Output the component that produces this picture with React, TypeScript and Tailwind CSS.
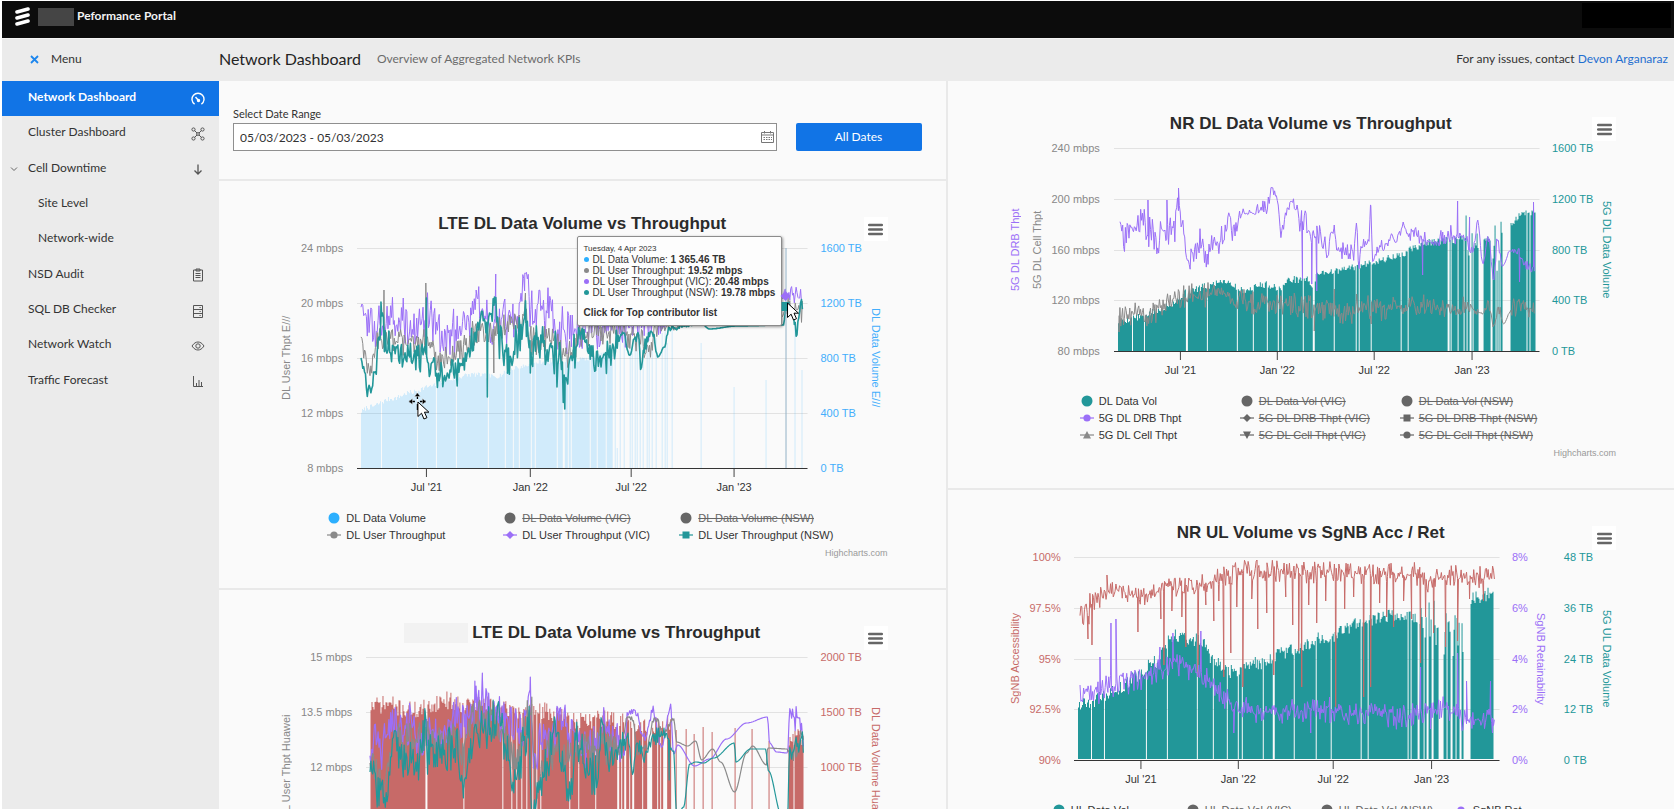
import React from "react";

type Key = [number, number, number?];

function random(seed: number) {
  let s = seed;
  return () => {
    s = (s * 1664525 + 1013904223) % 4294967296;
    return s / 4294967296;
  };
}

function sample(keys: Key[], x: number, amp: number): [number, number] {
  for (let i = 1; i < keys.length; i++) {
    if (x <= keys[i][0]) {
      const a = keys[i - 1];
      const b = keys[i];
      const t = Math.max(0, (x - a[0]) / (b[0] - a[0] || 1));
      const e = t * t * (3 - 2 * t);
      const n = (a[2] ?? amp) * (1 - t) + (b[2] ?? amp) * t;
      return [a[1] + (b[1] - a[1]) * e, n];
    }
  }
  const l = keys[keys.length - 1];
  return [l[1], l[2] ?? amp];
}

function linePath(keys: Key[], amp: number, seed: number, spikes: [number, number][] = []) {
  const rnd = random(seed);
  const pts: [number, number][] = [];
  const end = keys[keys.length - 1][0];
  for (let x = keys[0][0]; x <= end; x += 0.9) {
    const [y, n] = sample(keys, x, amp);
    const r = rnd() * 2 - 1;
    pts.push([x, y + n * r * (0.45 + 0.8 * Math.abs(r))]);
  }
  spikes.forEach((s) => pts.push(s));
  pts.sort((a, b) => a[0] - b[0]);
  return "M" + pts.map((p) => `${p[0].toFixed(1)} ${p[1].toFixed(1)}`).join("L");
}

function barPath(
  keys: Key[],
  amp: number,
  seed: number,
  h: number,
  gaps: [number, number][],
  singles: [number, number][] = [],
) {
  const rnd = random(seed);
  const end = keys[keys.length - 1][0];
  let d = `M${keys[0][0]} ${h}`;
  for (let x = keys[0][0]; x < end; x++) {
    const [y, n] = sample(keys, x, amp);
    const r = rnd();
    const inGap = gaps.some((g) => x >= g[0] && x < g[0] + g[1]);
    const top = inGap ? h : y - n * r;
    d += `V${top.toFixed(1)}H${x + 1}`;
  }
  d += `V${h}Z`;
  singles.forEach(([x, y]) => {
    d += `M${x} ${h}V${y}h1V${h}Z`;
  });
  return d;
}

const TEAL = "#229799";
const PURPLE = "#9b6ff7";
const GREY = "#8a8a8a";
const RED = "#c76a68";

type Layer = { d: string; fill?: string; stroke?: string; width?: number; opacity?: number };
type Marker = "dot" | "circle" | "diamond" | "square" | "up" | "down";
type Item = { label: string; marker: Marker; color: string; off?: boolean };
type Axis = { title: string; color: string; ticks?: string[] };
type ChartProps = {
  title: string;
  redacted?: boolean;
  w: number;
  h: number;
  lines: number;
  layers: Layer[];
  left: Axis[];
  right: Axis[];
  leftClass: string;
  rightClass: string;
  ticksX: number[];
  legend: Item[];
  legendClass: string;
  children?: React.ReactNode;
};

function LegendMark({ marker, color }: { marker: Marker; color: string }) {
  return (
    <svg width="16" height="14" viewBox="0 0 16 14" className="shrink-0" aria-hidden="true">
      {marker === "dot" ? (
        <circle cx="8" cy="7" r="5.5" fill={color} />
      ) : (
        <>
          <path d="M1 7H15" stroke={color} strokeOpacity="0.8" strokeWidth="1.5" />
          {marker === "circle" && <circle cx="8" cy="7" r="3.6" fill={color} />}
          {marker === "diamond" && <path d="M8 3L12 7L8 11L4 7Z" fill={color} />}
          {marker === "square" && <rect x="4.5" y="3.5" width="7" height="7" fill={color} />}
          {marker === "up" && <path d="M8 3L12 10.5H4Z" fill={color} />}
          {marker === "down" && <path d="M8 11L12 3.5H4Z" fill={color} />}
        </>
      )}
    </svg>
  );
}

function Ticks({ axis, className }: { axis: Axis; className: string }) {
  return (
    <div
      className={"-my-[6px] flex flex-col justify-between text-[11px] leading-[12px] whitespace-nowrap " + className}
      style={{ color: axis.color }}
    >
      {axis.ticks!.map((t) => (
        <span key={t}>{t}</span>
      ))}
    </div>
  );
}

const DATES = ["Jul '21", "Jan '22", "Jul '22", "Jan '23"];

function Chart(p: ChartProps) {
  return (
    <section className="flex h-[407px] shrink-0 flex-col bg-[#fafafa] font-['Liberation_Sans',Arial,sans-serif]">
      <div className="grid h-[67px] shrink-0 grid-cols-[1fr_auto_1fr] pt-[31px]">
        <span />
        <h2 className="flex items-center gap-1 self-start text-[17px] leading-[24px] font-bold whitespace-nowrap text-[#2b2b2b]">
          {p.redacted && <span className="h-5 w-16 bg-[#f2f2f2]" />}
          {p.title}
        </h2>
        <button
          type="button"
          aria-label="Chart context menu"
          className="mt-[5px] mr-[58px] flex size-6 items-center justify-center justify-self-end bg-white"
        >
          <svg width="15" height="13" viewBox="0 0 15 13" aria-hidden="true">
            <path d="M1.2 2H13.8M1.2 6.5H13.8M1.2 11H13.8" stroke="#666" strokeWidth="2.5" strokeLinecap="round" />
          </svg>
        </button>
      </div>
      <div className="flex min-h-0 flex-1">
        <div className={"flex shrink-0 gap-2 pr-[14px] pl-[60px] " + p.leftClass}>
          {p.left.map((a) => (
            <span
              key={a.title}
              className="w-[14px] rotate-180 text-center text-[11px] leading-[14px] whitespace-nowrap [writing-mode:vertical-rl]"
              style={{ color: a.color }}
            >
              {a.title}
            </span>
          ))}
          <Ticks axis={p.left[p.left.length - 1]} className="ml-auto text-right" />
        </div>
        <div className="relative min-w-0 flex-1">
          <svg
            className="block h-full w-full overflow-visible"
            viewBox={`0 0 ${p.w} ${p.h}`}
            preserveAspectRatio="none"
            role="img"
            aria-label={p.title}
          >
            {Array.from({ length: p.lines }, (_, i) => {
              const y = Math.round((p.h * i) / p.lines) + 0.5;
              return <path key={i} d={`M0 ${y}H${p.w}`} stroke="#e2e2e2" />;
            })}
            {p.layers.map((l, i) => (
              <path
                key={i}
                d={l.d}
                fill={l.fill ?? "none"}
                fillOpacity={l.opacity}
                stroke={l.stroke}
                strokeWidth={l.width ?? 1}
                strokeLinejoin="round"
              />
            ))}
            <path d={`M0 ${p.h + 0.5}H${p.w}`} stroke="#333" />
          </svg>
          {p.children}
        </div>
        <div className={"flex shrink-0 pr-[60px] pl-[13px] " + p.rightClass}>
          {p.right.map((a) => (
            <div key={a.title} className="flex flex-1 justify-between last:flex-none last:gap-[7px]">
              <Ticks axis={a} className="text-left" />
              <span
                className="w-[14px] text-center text-[11px] leading-[14px] whitespace-nowrap [writing-mode:vertical-rl]"
                style={{ color: a.color }}
              >
                {a.title}
              </span>
            </div>
          ))}
        </div>
      </div>
      <div className="flex h-[41px] shrink-0">
        <div className={"shrink-0 " + p.leftClass} />
        <svg className="h-full min-w-0 flex-1 overflow-visible">
          {DATES.map((t, i) => {
            const x = `${((p.ticksX[i] / p.w) * 100).toFixed(2)}%`;
            return (
              <g key={t}>
                <line x1={x} x2={x} y1="1" y2="9" stroke="#444" />
                <text x={x} y="23" textAnchor="middle" fontSize="11" fill="#333">
                  {t}
                </text>
              </g>
            );
          })}
        </svg>
        <div className={"shrink-0 " + p.rightClass} />
      </div>
      <ul className={"grid justify-center " + p.legendClass}>
        {p.legend.map((it) => (
          <li
            key={it.label}
            className="flex h-[17px] items-center gap-1 pl-2 text-[11px] whitespace-nowrap text-[#333]"
          >
            <LegendMark marker={it.marker} color={it.color} />
            <span className={it.off ? "text-[#666] line-through" : ""}>{it.label}</span>
          </li>
        ))}
      </ul>
      <div className="flex h-[45px] shrink-0 justify-end pt-[4px] pr-[58px]">
        <a href="#highcharts" className="text-[9px] leading-[12px] text-[#999]">
          Highcharts.com
        </a>
      </div>
    </section>
  );
}

const OFF = "#666666";

/* ---------- LTE ---------- */
const lteBars = barPath(
  [[4, 166], [10, 162], [36, 153], [53, 147], [73, 141], [90, 134], [115, 129], [137, 131], [163, 121], [186, 116], [220, 114], [256, 108]],
  5, 7, 220,
  [[24, 1], [60, 1], [79, 1], [99, 1], [131, 1], [148, 1], [156, 1], [162, 1], [174, 1], [178, 1], [200, 1], [206, 2], [211, 1], [214, 1], [233, 1], [240, 1], [249, 1]],
  [[258, 100], [260, 200], [263, 90], [267, 85], [273, 90], [275, 100], [278, 95], [280, 85], [283, 100], [286, 90], [290, 85], [292, 100], [295, 95], [299, 90], [305, 85], [308, 80], [310, 95], [315, 77], [344, 95], [377, 139], [409, 132], [438, 74], [445, 122]],
);
const ltePurple = linePath(
  [[4, 68], [20, 80], [36, 74], [50, 74], [57, 88], [69, 66], [82, 86], [105, 84], [114, 72], [119, 52], [128, 74], [150, 76], [160, 66], [166, 42], [169, 35], [173, 60], [190, 64], [200, 80], [215, 84], [240, 78], [270, 76], [300, 66], [320, 60, 5], [345, 50, 1], [380, 45, 1], [425, 50, 3], [430, 45, 8], [445, 50, 10]],
  20, 21, [[119.3, 42], [138.9, 26], [168, 25]],
);
const lteGrey = linePath(
  [[4, 94], [13, 122], [20, 90], [32, 92], [43, 96], [56, 98], [69, 94], [80, 112], [103, 105], [118, 85], [143, 82], [168, 72], [176, 94], [196, 88], [208, 108], [228, 88], [250, 86], [270, 85], [285, 90], [290, 106], [300, 78], [315, 80, 3], [345, 70, 1], [425, 70, 2], [430, 58, 9], [446, 62, 12]],
  12, 33, [[27, 42], [68.9, 35], [137, 125], [168.6, 45]],
);
const lteTeal = linePath(
  [[4, 115], [13, 146], [18, 124], [21, 90, 14], [25, 68, 18], [28, 92], [37, 107], [53, 105], [66, 110], [76, 122], [85, 129], [100, 123], [110, 108], [120, 80], [130, 74], [138, 60], [143, 94, 16], [153, 108, 16], [166, 84, 16], [168, 68, 18], [174, 104, 16], [182, 92, 16], [193, 100, 22], [200, 110, 26], [208, 132, 28], [213, 114, 20], [223, 92], [232, 92], [237, 112, 16], [253, 106, 15], [262, 90, 8], [267, 86, 3], [273, 108, 4], [278, 90, 3], [282, 88, 4], [284, 122, 3], [288, 96, 8], [296, 86, 8], [301, 109, 0], [308, 99, 1], [312, 80, 3], [345, 76, 0], [353, 81, 0], [380, 78, 0], [427, 77, 0], [430, 62, 6], [437, 68, 8], [440, 86, 2], [443, 58, 8], [446, 56, 6]],
  12, 45, [[24, 54], [69.5, 50], [130.5, 149], [137.6, 49], [173.5, 125], [208, 161]],
);

/* ---------- LTE second vendor ---------- */
const huaBars = barPath(
  [[4.5, 58], [22, 56], [38, 62], [52, 62], [64, 57], [78, 52], [94, 56], [118, 56], [138, 62], [165, 64], [178, 63], [190, 67], [205, 72], [221, 72], [238, 70], [250, 73], [275, 76], [305, 76]],
  18, 71, 220,
  [[59, 2], [97, 1], [136, 1], [145, 1], [150, 1], [155, 1], [160, 1], [166, 1], [170, 1], [174, 1], [203, 1], [212, 1], [229, 1], [251, 2], [255, 1], [258, 2], [263, 1], [266, 2], [276, 1], [281, 5], [291, 1], [294, 1], [297, 4]],
  [[310, 73], [320, 72], [328, 77], [337, 70], [346, 75], [369, 71], [386, 72], [403, 84]],
);
const huaBars2 = barPath([[423, 92], [432, 80], [438, 92]], 14, 17, 220, [[428, 1]]);
const huaPurple = linePath(
  [[4, 106], [10, 74], [14, 92], [21, 78], [30, 70], [48, 70], [58, 90], [64, 74], [78, 72], [94, 60], [98, 75], [105, 50], [116, 44], [121, 55], [138, 62], [158, 68], [164, 35], [168, 100], [181, 78], [197, 62], [205, 84], [228, 92], [238, 74], [248, 80], [258, 96, 8], [262, 56, 3], [270, 54, 4], [278, 80, 4], [288, 56, 6], [296, 90, 3], [305, 50, 1], [308, 98, 1], [312, 88, 0], [329, 109, 0], [344, 102, 0], [361, 82, 0], [381, 66, 0], [402, 60, 0], [404, 86, 0], [411, 95, 0], [422, 96, 0], [424, 60, 8], [435, 62, 12], [438, 86, 4]],
  19, 81, [[109, 24], [116.5, 16], [164.5, 20], [305, 47]],
);
const huaGrey = linePath(
  [[4, 112], [16, 130], [28, 85], [46, 84], [60, 84], [80, 84], [96, 90], [110, 62], [126, 58], [136, 80], [150, 104], [165, 52], [170, 130], [184, 94], [205, 100], [225, 90], [240, 88], [255, 92, 6], [262, 60, 1], [267, 62, 2], [272, 96, 2], [281, 90, 3], [289, 60, 3], [298, 76, 3], [308, 62, 1], [311, 85, 0], [322, 89, 0], [330, 84, 0], [336, 103, 0], [347, 92, 0], [355, 105, 0], [369, 135, 0], [381, 96, 0], [387, 89, 0], [401, 108, 0], [402, 91, 0], [422, 92, 0], [424, 100, 6], [432, 90, 10], [438, 76, 8]],
  16, 91, [[98, 130], [166, 40]],
);
const huaTeal = linePath(
  [[4, 122], [13, 136, 22], [21, 140, 20], [27, 96], [38, 103], [54, 104], [59, 72], [62, 98], [71, 97], [91, 90], [98, 128, 6], [105, 86], [118, 70], [135, 60], [138, 96], [151, 118], [163, 66], [166, 158, 4], [172, 132], [181, 108], [190, 72], [204, 136, 10], [211, 88], [228, 118], [238, 74], [241, 106], [257, 88, 12], [262, 80, 6], [267, 116, 1], [271, 86, 4], [278, 98, 8], [288, 78, 8], [303, 80, 8], [305, 92, 1], [308, 94, 1], [311, 160, 0], [318, 150, 0], [324, 107, 0], [330, 105, 0], [338, 106, 0], [348, 101, 0], [369, 86, 0], [370, 105, 0], [385, 92, 0], [400, 92, 0], [403, 114, 0], [416, 158, 0], [422, 162, 0], [424, 95, 6], [438, 84, 14]],
  19, 97, [[97.5, 141], [303.5, 123]],
);

/* ---------- NR downlink ---------- */
const nrBars = barPath(
  [[4, 177], [22, 173], [43, 167], [56, 159], [76, 146], [92, 142], [109, 136], [130, 146], [150, 140], [166, 143], [176, 135], [193, 135], [200, 144], [203, 128], [220, 127], [243, 122], [260, 117], [287, 111], [297, 104], [314, 98], [334, 96], [350, 94], [352, 120, 60], [367, 100], [370, 94], [378, 96], [380, 130, 60], [390, 110, 40], [397, 78], [407, 71], [414, 68], [422, 66]],
  7, 5, 203,
  [[18, 1], [30, 1], [72, 2], [93, 1], [123, 1], [139, 1], [153, 1], [164, 1], [168, 1], [189, 1], [199, 2], [220, 1], [242, 1], [245, 1], [257, 1], [287, 1], [294, 1], [334, 2], [337, 1], [344, 1], [350, 1], [353, 1], [356, 2], [359, 1], [365, 5], [377, 2], [382, 1], [384, 1], [386, 1], [389, 8], [413, 1], [416, 1]],
);
const nrPurple = linePath(
  [[6, 80], [10, 94], [16, 82], [30, 76], [36, 84], [43, 95], [48, 80], [53, 92], [60, 78], [65, 62], [68, 76], [74, 116, 3], [80, 106], [83, 94], [93, 104], [103, 94], [116, 82], [130, 66, 7], [143, 63, 7], [153, 58, 7], [158, 40, 3], [164, 52, 4], [167, 88, 3], [172, 68, 5], [178, 56, 7], [188, 70], [193, 82], [205, 86, 9], [213, 100, 8], [220, 82], [224, 102, 7], [240, 104, 7], [243, 74, 3], [245, 120, 2], [248, 94, 5], [255, 92, 6], [257, 60, 3], [259, 112, 3], [266, 98, 5], [280, 91, 5], [290, 82, 8], [305, 88, 6], [320, 96, 6], [333, 86, 9], [343, 88, 7], [349, 86, 6], [358, 106, 6], [361, 96, 4], [364, 71, 1], [369, 114, 2], [375, 88, 5], [380, 134, 3], [384, 94, 8], [389, 118, 0], [397, 103, 2], [405, 108, 7], [414, 116, 5], [421, 122, 5]],
  14, 11, [[34, 52], [53, 52], [64.6, 40], [188.7, 131], [198, 136], [203, 143], [220.5, 77], [256.8, 57], [309, 127], [344, 53], [356, 69], [406, 134], [420, 54]],
);
const nrGrey = linePath(
  [[5, 172], [20, 165], [36, 167], [50, 156], [60, 151], [80, 148], [109, 145], [123, 152], [143, 156], [176, 156], [200, 160], [220, 162], [240, 166], [248, 158], [262, 161], [314, 158], [334, 161, 6], [345, 163, 3], [350, 157, 7], [358, 161, 4], [369, 166, 1], [375, 157, 5], [380, 180, 4], [385, 160, 6], [390, 176, 0], [397, 164, 1], [399, 160, 8], [421, 160, 9]],
  10, 19, [[5, 184], [200.5, 183], [220.6, 141], [243, 146], [257.5, 176]],
);

/* ---------- NR uplink ---------- */
const ulBars = barPath(
  [[4, 154], [20, 150], [40, 142], [60, 128], [80, 112], [100, 86], [125, 90], [140, 112], [155, 122], [180, 114], [210, 102], [250, 88], [290, 72], [320, 64], [345, 66], [352, 90, 50], [390, 110, 50], [397, 48], [420, 44]],
  14, 15, 202,
  [[17, 1], [30, 1], [72, 1], [93, 1], [123, 1], [139, 1], [153, 1], [164, 1], [168, 1], [189, 1], [199, 2], [220, 1], [242, 1], [257, 1], [287, 1], [294, 1], [334, 1], [337, 1], [344, 2], [350, 1], [353, 2], [358, 2], [365, 5], [373, 1], [377, 2], [382, 1], [386, 2], [390, 7]],
);
const ulRed = linePath(
  [[6, 66, 18], [14, 56, 18], [22, 44, 10], [32, 36], [60, 38], [80, 36], [90, 30], [130, 28], [150, 18], [180, 12], [210, 15], [260, 15], [300, 18], [340, 16], [355, 24, 10], [370, 18], [421, 20]],
  9, 53,
  [[14, 82], [18, 88], [33, 18], [64, 75], [87, 62], [90, 108], [98, 54], [108, 60], [112, 90], [124, 120], [132, 48], [140, 64], [145, 44], [150, 120], [157, 96], [163, 50], [169, 130], [178, 42], [184, 72], [193, 56], [200, 118], [212, 40], [219, 68], [225, 94], [228, 130], [235, 48], [243, 66], [252, 44], [262, 150], [271, 52], [280, 40], [290, 140], [297, 130], [306, 46], [313, 60], [320, 70], [330, 44], [338, 62], [347, 106], [352, 60], [360, 76], [372, 90], [384, 84], [396, 42], [410, 44]],
);
const ulPurple = linePath(
  [[6, 132], [20, 136], [34, 130], [50, 126], [70, 122], [100, 106], [120, 112], [140, 128], [160, 150], [190, 156], [230, 154], [280, 158], [330, 160], [370, 152], [390, 162], [421, 162]],
  10, 63,
  [[26, 100], [37, 66], [42, 62], [86, 90], [99, 76], [127, 74], [160, 176], [237, 176], [256, 140], [347, 110], [357, 172], [384, 96], [393, 124], [417, 124], [419, 176]],
);

function Tooltip() {
  const rows = [
    ["#2caffe", "DL Data Volume:", "1 365.46 TB"],
    [GREY, "DL User Throughput:", "19.52 mbps"],
    [PURPLE, "DL User Throughput (VIC):", "20.48 mbps"],
    [TEAL, "DL User Throughput (NSW):", "19.78 mbps"],
  ];
  return (
    <div className="absolute -top-3 right-[26px] h-[90px] w-[205px] rounded-[2px] border border-[#8c8c8c] bg-[#fdfdfd] px-[6px] pt-[6px] text-[10px] leading-[11px] whitespace-nowrap text-[#333] shadow-[1px_1px_3px_rgba(0,0,0,0.4)]">
      <div className="text-[8px] leading-[11px]">Tuesday, 4 Apr 2023</div>
      {rows.map(([c, l, v]) => (
        <div key={l} className="flex items-center gap-1">
          <span className="size-[5px] shrink-0 rounded-full" style={{ backgroundColor: c }} />
          <span>
            {l} <b>{v}</b>
          </span>
        </div>
      ))}
      <div className="pt-[9px] font-bold">Click for Top contributor list</div>
    </div>
  );
}

const ARROW = "M1 1V15.5L4.6 12.2L7 18L10 16.7L7.5 11.2H12Z";

function LteOverlay() {
  return (
    <>
      <Tooltip />
      <svg
        className="pointer-events-none absolute inset-0 h-full w-full overflow-visible"
        viewBox="0 0 451 220"
        preserveAspectRatio="none"
        aria-hidden="true"
      >
        <path d="M429.5 0V220" stroke="#93b2c6" strokeWidth="1" />
        <path d="M429 43L434 48L429 53L424 48Z" fill={PURPLE} />
        <path d="M425 54h8v9h-8z" fill={TEAL} />
        <g transform="translate(430 54)">
          <path d={ARROW} fill="#fff" stroke="#000" />
        </g>
        <path d="M52 153.500H69M60.500 145V162" stroke="#000" strokeWidth="1.3" strokeDasharray="6 5 6" />
        <path
          d="M52 153.500l3.500-3v6zM69 153.500l-3.500-3v6zM60.500 145l-3 3.500h6z"
          fill="#000"
          stroke="#fff"
          strokeWidth="0.400"
        />
        <g transform="translate(60 153)">
          <path d={ARROW} fill="#fff" stroke="#000" />
        </g>
      </svg>
    </>
  );
}

const icon = { width: 14, height: 14, viewBox: "0 0 14 14", fill: "none", stroke: "currentColor", strokeWidth: 1 };

const NAV: { label: string; active?: boolean; sub?: boolean; open?: boolean; icon?: React.ReactNode }[] = [
  {
    label: "Network Dashboard",
    active: true,
    icon: (
      <svg {...icon} strokeWidth={1.4}>
        <path d="M3.600 12.200A6 6 0 1 1 10.400 12.200M7.500 8.500L4.500 5" />
        <circle cx="7.500" cy="8.500" r="1" fill="currentColor" />
      </svg>
    ),
  },
  {
    label: "Cluster Dashboard",
    icon: (
      <svg {...icon}>
        <circle cx="2.500" cy="2.500" r="1.600" />
        <circle cx="11.500" cy="2.500" r="1.600" />
        <circle cx="2.500" cy="11.500" r="1.600" />
        <circle cx="11.500" cy="11.500" r="1.600" />
        <path d="M3.600 3.600L6 6M10.400 3.600L8 6M3.600 10.400L6 8M10.400 10.400L8 8M5.800 5.800h2.400v2.400H5.800z" />
      </svg>
    ),
  },
  {
    label: "Cell Downtime",
    open: true,
    icon: (
      <svg {...icon} strokeWidth={1.3}>
        <path d="M7 2.500V12M3.500 8.500L7 12L10.500 8.500" />
      </svg>
    ),
  },
  { label: "Site Level", sub: true },
  { label: "Network-wide", sub: true },
  {
    label: "NSD Audit",
    icon: (
      <svg {...icon}>
        <path d="M2.500 2H11.500V13H2.500ZM5 1H9V3H5ZM4.500 5.500H9.500M4.500 7.500H9.500M4.500 9.500H9.500" />
      </svg>
    ),
  },
  {
    label: "SQL DB Checker",
    icon: (
      <svg {...icon}>
        <path d="M2.500 1.500H11.500V13.500H2.500ZM2.500 5.500H11.500M2.500 9.500H11.500M8.500 3.500H9.700M8.500 7.500H9.700M8.500 11.500H9.700" />
      </svg>
    ),
  },
  {
    label: "Network Watch",
    icon: (
      <svg {...icon}>
        <path d="M1 7C3 4 5 3 7 3S11 4 13 7C11 10 9 11 7 11S3 10 1 7Z" />
        <circle cx="7" cy="7" r="2.200" />
      </svg>
    ),
  },
  {
    label: "Traffic Forecast",
    icon: (
      <svg {...icon}>
        <path d="M2.500 2V12.500H12M5.500 12V9M8 12V6M10.500 12V8" />
      </svg>
    ),
  },
];

function Sidebar() {
  return (
    <nav className="w-[217px] shrink-0 bg-[#ebebeb]">
      <ul className="grid h-[318px] grid-rows-9">
        {NAV.map((n) => (
          <li key={n.label} className="min-h-0">
            <a
              href="#nav"
              className={
                "flex h-full items-center pr-[14px] " +
                (n.active ? "bg-[#1174e6] font-bold text-white " : "text-[#333] ") +
                (n.sub ? "pl-[36px]" : n.open ? "pl-[7px]" : "pl-[26px]")
              }
            >
              {n.open && (
                <svg width="10" height="10" viewBox="0 0 10 10" className="mr-[9px]" aria-hidden="true">
                  <path d="M2 3.500L5 6.500L8 3.500" fill="none" stroke="#666" />
                </svg>
              )}
              <span className="pb-[3px]">{n.label}</span>
              <span className={n.active ? "ml-auto" : "ml-auto text-[#555]"}>{n.icon}</span>
            </a>
          </li>
        ))}
      </ul>
    </nav>
  );
}

export default function App() {
  return (
    <div className="flex h-screen flex-col overflow-hidden bg-white pt-px pr-[3px] pb-[3px] pl-[2px] font-[Lato,sans-serif] text-[12px] leading-[18px]">
      <header className="flex h-[37px] shrink-0 items-start bg-[#0c0c0c] pr-[3px] pl-[13px]">
        <svg width="15" height="19" viewBox="0 0 15 19" className="mt-[6px]" aria-hidden="true">
          <path d="M2 5L13 2M2 11L13 8M2 17L13 14" stroke="#fff" strokeWidth="3.600" strokeLinecap="round" />
        </svg>
        <span className="mt-[7px] ml-2 h-[18px] w-9 bg-[#454545]" />
        <span className="mt-[6px] ml-[3px] font-bold text-[#f2f2f2]">Peformance Portal</span>
        <span className="mt-[2px] ml-auto h-[25px] w-[89px] bg-black" />
      </header>
      <div className="flex h-[43px] shrink-0 items-center border-t border-[#f5f5f5] bg-[#ebebeb] pr-[6px] pb-[2px]">
        <button type="button" className="flex w-[217px] items-center gap-3 pl-[28px] text-[#333]">
          <svg width="9" height="9" viewBox="0 0 9 9" aria-hidden="true">
            <path d="M1 1L8 8M8 1L1 8" stroke="#1c86ee" strokeWidth="1.800" />
          </svg>
          Menu
        </button>
        <h1 className="text-[16px] text-[#242424]">Network Dashboard</h1>
        <p className="ml-4 text-[#6b6b6b]">Overview of Aggregated Network KPIs</p>
        <p className="ml-auto text-[#333]">
          For any issues, contact{" "}
          <a href="#contact" className="text-[#1f6fd0]">
            Devon Arganaraz
          </a>
        </p>
      </div>
      <div className="flex min-h-0 flex-1">
        <Sidebar />
        <main className="grid min-w-0 flex-1 grid-cols-2 gap-[2px] overflow-hidden bg-[#e9e9e9]">
          <div className="flex min-w-0 flex-col gap-[2px]">
            <section className="h-[98px] shrink-0 bg-[#fafafa] pt-[24px] pr-[24px] pl-[14px]">
              <label htmlFor="range" className="block text-[11px] text-[#333]">
                Select Date Range
              </label>
              <div className="flex items-center gap-[19px]">
                <div className="flex h-[28px] flex-1 items-center border border-[#8f8f8f] bg-white pr-[2px]">
                  <input
                    id="range"
                    type="text"
                    defaultValue="05/03/2023 - 05/03/2023"
                    className="h-full min-w-0 flex-1 bg-transparent px-[6px] text-[#333] outline-none"
                  />
                  <svg width="13" height="12" viewBox="0 0 13 12" fill="none" stroke="#777" aria-hidden="true">
                    <path d="M0.500 1.500H12.500V11.500H0.500ZM0.500 4H12.500" />
                    <path d="M3.500 0V2.500M9.500 0V2.500" />
                    <path d="M2.500 6.500H11M2.500 8.500H11" strokeDasharray="1.500 1" />
                  </svg>
                </div>
                <button type="button" className="h-[28px] w-[126px] rounded-[2px] bg-[#1174e6] text-white">
                  All Dates
                </button>
              </div>
            </section>
            <Chart
              title="LTE DL Data Volume vs Throughput"
              w={451}
              h={220}
              lines={4}
              layers={[
                { d: lteBars, fill: "#2caffe", opacity: 0.2 },
                { d: ltePurple, stroke: PURPLE },
                { d: lteGrey, stroke: GREY },
                { d: lteTeal, stroke: TEAL, width: 1.6 },
              ]}
              left={[{ title: "DL User Thpt E///", color: "#888", ticks: ["24 mbps", "20 mbps", "16 mbps", "12 mbps", "8 mbps"] }]}
              right={[{ title: "DL Data Volume E///", color: "#43aefc", ticks: ["1600 TB", "1200 TB", "800 TB", "400 TB", "0 TB"] }]}
              leftClass="w-[138px]"
              rightClass="w-[138px]"
              ticksX={[69.5, 173.5, 274.5, 377.5]}
              legendClass="grid-cols-[176px_176px_176px]"
              legend={[
                { label: "DL Data Volume", marker: "dot", color: "#2caffe" },
                { label: "DL Data Volume (VIC)", marker: "dot", color: OFF, off: true },
                { label: "DL Data Volume (NSW)", marker: "dot", color: OFF, off: true },
                { label: "DL User Throughput", marker: "circle", color: GREY },
                { label: "DL User Throughput (VIC)", marker: "diamond", color: PURPLE },
                { label: "DL User Throughput (NSW)", marker: "square", color: TEAL },
              ]}
            >
              <LteOverlay />
            </Chart>
            <Chart
              title="LTE DL Data Volume vs Throughput"
              redacted
              w={442}
              h={220}
              lines={4}
              layers={[
                { d: huaBars, fill: RED },
                { d: huaBars2, fill: RED },
                { d: huaPurple, stroke: PURPLE, width: 1.2 },
                { d: huaGrey, stroke: GREY, width: 1.2 },
                { d: huaTeal, stroke: TEAL, width: 1.2 },
              ]}
              left={[{ title: "DL User Thpt Huawei", color: "#888", ticks: ["15 mbps", "13.5 mbps", "12 mbps", "10.5 mbps", "9 mbps"] }]}
              right={[{ title: "DL Data Volume Huawei", color: RED, ticks: ["2000 TB", "1500 TB", "1000 TB", "500 TB", "0 TB"] }]}
              leftClass="w-[147px]"
              rightClass="w-[138px]"
              ticksX={[69.5, 172, 271, 372]}
              legendClass="grid-cols-[176px_176px_176px]"
              legend={[
                { label: "DL Data Volume", marker: "dot", color: RED },
                { label: "DL Data Volume (VIC)", marker: "dot", color: OFF, off: true },
                { label: "DL Data Volume (NSW)", marker: "dot", color: OFF, off: true },
                { label: "DL User Throughput", marker: "circle", color: GREY },
                { label: "DL User Throughput (VIC)", marker: "diamond", color: PURPLE },
                { label: "DL User Throughput (NSW)", marker: "square", color: TEAL },
              ]}
            />
          </div>
          <div className="flex min-w-0 flex-col gap-[2px]">
            <Chart
              title="NR DL Data Volume vs Throughput"
              w={426}
              h={203}
              lines={4}
              layers={[
                { d: nrBars, fill: TEAL },
                { d: nrPurple, stroke: PURPLE },
                { d: nrGrey, stroke: GREY },
              ]}
              left={[
                { title: "5G DL DRB Thpt", color: PURPLE },
                { title: "5G DL Cell Thpt", color: "#888", ticks: ["240 mbps", "200 mbps", "160 mbps", "120 mbps", "80 mbps"] },
              ]}
              right={[{ title: "5G DL Data Volume", color: TEAL, ticks: ["1600 TB", "1200 TB", "800 TB", "400 TB", "0 TB"] }]}
              leftClass="w-[166px]"
              rightClass="w-[135px]"
              ticksX={[66.5, 163.5, 260.5, 358.5]}
              legendClass="grid-cols-[160px_160px_160px]"
              legend={[
                { label: "DL Data Vol", marker: "dot", color: TEAL },
                { label: "DL Data Vol (VIC)", marker: "dot", color: OFF, off: true },
                { label: "DL Data Vol (NSW)", marker: "dot", color: OFF, off: true },
                { label: "5G DL DRB Thpt", marker: "circle", color: PURPLE },
                { label: "5G DL DRB Thpt (VIC)", marker: "diamond", color: OFF, off: true },
                { label: "5G DL DRB Thpt (NSW)", marker: "square", color: OFF, off: true },
                { label: "5G DL Cell Thpt", marker: "up", color: GREY },
                { label: "5G DL Cell Thpt (VIC)", marker: "down", color: OFF, off: true },
                { label: "5G DL Cell Thpt (NSW)", marker: "circle", color: OFF, off: true },
              ]}
            />
            <Chart
              title="NR UL Volume vs SgNB Acc / Ret"
              w={426}
              h={203}
              lines={4}
              layers={[
                { d: ulBars, fill: TEAL },
                { d: ulRed, stroke: RED },
                { d: ulPurple, stroke: PURPLE },
              ]}
              left={[{ title: "SgNB Accessibility", color: RED, ticks: ["100%", "97.5%", "95%", "92.5%", "90%"] }]}
              right={[
                { title: "SgNB Retainability", color: PURPLE, ticks: ["8%", "6%", "4%", "2%", "0%"] },
                { title: "5G UL Data Volume", color: TEAL, ticks: ["48 TB", "36 TB", "24 TB", "12 TB", "0 TB"] },
              ]}
              leftClass="w-[126px]"
              rightClass="w-[175px] gap-4"
              ticksX={[67, 164.5, 259.5, 358]}
              legendClass="grid-cols-[134px_134px_134px_134px]"
              legend={[
                { label: "UL Data Vol", marker: "dot", color: TEAL },
                { label: "UL Data Vol (VIC)", marker: "dot", color: OFF, off: true },
                { label: "UL Data Vol (NSW)", marker: "dot", color: OFF, off: true },
                { label: "SgNB Ret", marker: "circle", color: PURPLE },
                { label: "SgNB Ret (VIC)", marker: "diamond", color: OFF, off: true },
                { label: "SgNB Ret (NSW)", marker: "square", color: OFF, off: true },
                { label: "SgNB Acc", marker: "up", color: RED },
                { label: "SgNB Acc (VIC)", marker: "down", color: OFF, off: true },
                { label: "SgNB Acc (NSW)", marker: "circle", color: OFF, off: true },
              ]}
            />
          </div>
        </main>
      </div>
    </div>
  );
}
